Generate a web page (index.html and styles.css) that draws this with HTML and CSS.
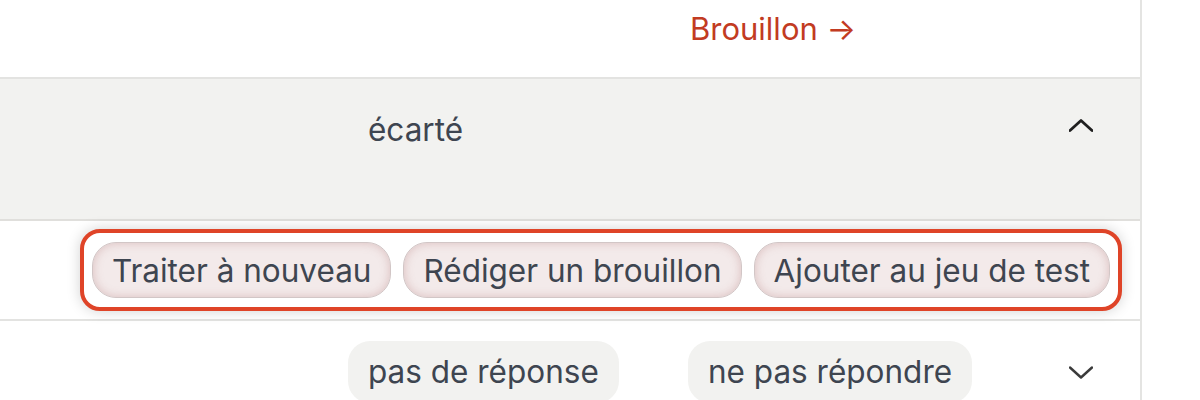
FILE: index.html
```html
<!DOCTYPE html>
<html lang="fr">
<head>
<meta charset="utf-8">
<link rel="stylesheet" href="styles.css">
</head>
<body>
<div class="panel">
  <div class="row row-top">
    <div class="cell"></div>
    <div class="cell"></div>
    <div class="cell"><a class="link">Brouillon →</a></div>
    <div class="cell"></div>
  </div>
  <div class="row row-open">
    <div class="cell"></div>
    <div class="cell text">écarté</div>
    <div class="cell"></div>
    <div class="cell chev">
      <svg viewBox="0 0 24 24" width="24" height="24"><path d="M1 12.5 L12 2.5 L23 12.5" fill="none" stroke="#1f1f1f" stroke-width="2.8" stroke-linecap="round" stroke-linejoin="round"/></svg>
    </div>
  </div>
  <div class="row row-actions">
    <div class="actions">
      <button class="btn">Traiter à nouveau</button>
      <button class="btn">Rédiger un brouillon</button>
      <button class="btn">Ajouter au jeu de test</button>
    </div>
  </div>
  <div class="row row-next">
    <div class="cell"></div>
    <div class="cell"><span class="pill">pas de réponse</span></div>
    <div class="cell"><span class="pill">ne pas répondre</span></div>
    <div class="cell chev">
      <svg viewBox="0 0 24 24" width="24" height="24"><path d="M1 7.5 L12 17.5 L23 7.5" fill="none" stroke="#3a3a3a" stroke-width="2.4" stroke-linecap="round" stroke-linejoin="round"/></svg>
    </div>
  </div>
</div>
</body>
</html>
```

FILE: styles.css
```css
* { box-sizing: border-box; }
html, body { margin: 0; padding: 0; background: #ffffff; }
body {
  width: 1200px;
  height: 400px;
  overflow: hidden;
  font-family: Inter, "Liberation Sans", sans-serif;
  color: #3e4550;
}
.panel {
  width: 1142px;
  border-right: 2px solid #e4e4e2;
  height: 400px;
}
.row {
  display: grid;
  grid-template-columns: 348px 340px 1fr 24px;
  padding-right: 47px;
}
.row-top {
  height: 79px;
  border-bottom: 2px solid #e3e3e1;
  padding-top: 10px;
}
.link {
  display: inline-block;
  margin-left: 2px;
  font-size: 31px;
  line-height: 38px;
  color: #c23b22;
}
.row-open {
  height: 142px;
  background: #f2f2f0;
  border-bottom: 2px solid #e0dfdc;
  padding-top: 32px;
}
.text {
  padding-left: 20px;
  font-size: 31.5px;
  line-height: 38px;
}
.chev { padding-top: 7px; }
.row-actions {
  display: flex;
  justify-content: flex-end;
  align-items: center;
  height: 100px;
  padding-right: 18px;
  border-bottom: 2px solid #e3e3e1;
}
.actions {
  display: flex;
  gap: 12px;
  padding: 9px 8px;
  border: 4px solid #df4428;
  border-radius: 20px;
  background: #ffffff;
  box-shadow: 0 0 14px rgba(0, 0, 0, 0.18);
}
.btn {
  font-family: Inter, "Liberation Sans", sans-serif;
  font-size: 31.5px;
  color: #3e4550;
  height: 56px;
  padding: 0 19px;
  border: 1.5px solid #d2c6c6;
  border-radius: 24px;
  background: #f3eaea;
  box-shadow: inset 0 0 10px rgba(175, 110, 110, 0.35);
}
.row-next {
  padding-top: 20px;
}
.row-next .chev { padding-top: 19px; }
.pill {
  display: inline-block;
  height: 62px;
  line-height: 62px;
  padding: 0 20px;
  border-radius: 22px;
  background: #f2f2f0;
  font-size: 31.5px;
}
```
